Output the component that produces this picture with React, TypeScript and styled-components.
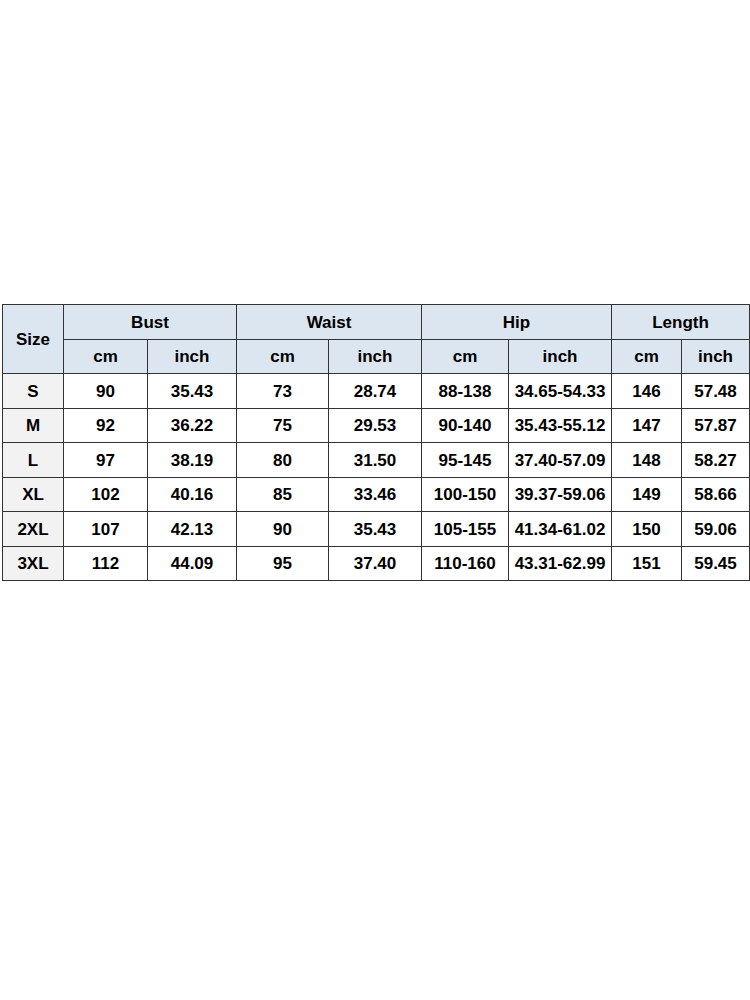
import React from "react";
import styled, { createGlobalStyle } from "styled-components";

const GlobalStyle = createGlobalStyle`
  html, body {
    margin: 0;
    padding: 0;
    background: #ffffff;
  }
  body {
    font-family: "Liberation Sans", Arial, sans-serif;
  }
`;

const columns = [61, 84, 89, 92, 93, 87, 103, 70, 68];

const groups = ["Bust", "Waist", "Hip", "Length"];

const rows = [
  ["S", "90", "35.43", "73", "28.74", "88-138", "34.65-54.33", "146", "57.48"],
  ["M", "92", "36.22", "75", "29.53", "90-140", "35.43-55.12", "147", "57.87"],
  ["L", "97", "38.19", "80", "31.50", "95-145", "37.40-57.09", "148", "58.27"],
  ["XL", "102", "40.16", "85", "33.46", "100-150", "39.37-59.06", "149", "58.66"],
  ["2XL", "107", "42.13", "90", "35.43", "105-155", "41.34-61.02", "150", "59.06"],
  ["3XL", "112", "44.09", "95", "37.40", "110-160", "43.31-62.99", "151", "59.45"],
];

const Page = styled.div`
  width: 750px;
  height: 1000px;
  padding: 304px 0 0 2px;
  box-sizing: border-box;
`;

const Table = styled.table`
  border-collapse: collapse;
  table-layout: fixed;
  width: 747px;
  color: #000;
  font-size: 17px;
  font-weight: bold;
  border: 1px solid #7a7a7a;
`;

// rows alternate 35/34px so the grid lands on the same lines as the picture
const Row = styled.tr<{ $tall?: boolean }>`
  height: ${(p) => (p.$tall ? 35 : 34)}px;
`;

const Cell = styled.td<{ $head?: boolean; $size?: boolean }>`
  border: 1px solid #333;
  padding: 0;
  text-align: center;
  vertical-align: middle;
  line-height: 1;
  background: ${(p) => (p.$head ? "#dce6f1" : p.$size ? "#f2f2f2" : "#ffffff")};
`;

export default function App() {
  return (
    <>
      <GlobalStyle />
      <Page>
        <Table>
          <colgroup>
            {columns.map((w, i) => (
              <col key={i} style={{ width: w }} />
            ))}
          </colgroup>
          <thead>
            <Row $tall>
              <Cell as="th" $head rowSpan={2}>
                Size
              </Cell>
              {groups.map((g) => (
                <Cell as="th" $head colSpan={2} key={g}>
                  {g}
                </Cell>
              ))}
            </Row>
            <Row>
              {groups.map((g) => (
                <React.Fragment key={g}>
                  <Cell as="th" $head>
                    cm
                  </Cell>
                  <Cell as="th" $head>
                    inch
                  </Cell>
                </React.Fragment>
              ))}
            </Row>
          </thead>
          <tbody>
            {rows.map((r, n) => (
              <Row key={r[0]} $tall={n % 2 === 0}>
                {r.map((v, i) => (
                  <Cell key={i} $size={i === 0}>
                    {v}
                  </Cell>
                ))}
              </Row>
            ))}
          </tbody>
        </Table>
      </Page>
    </>
  );
}
